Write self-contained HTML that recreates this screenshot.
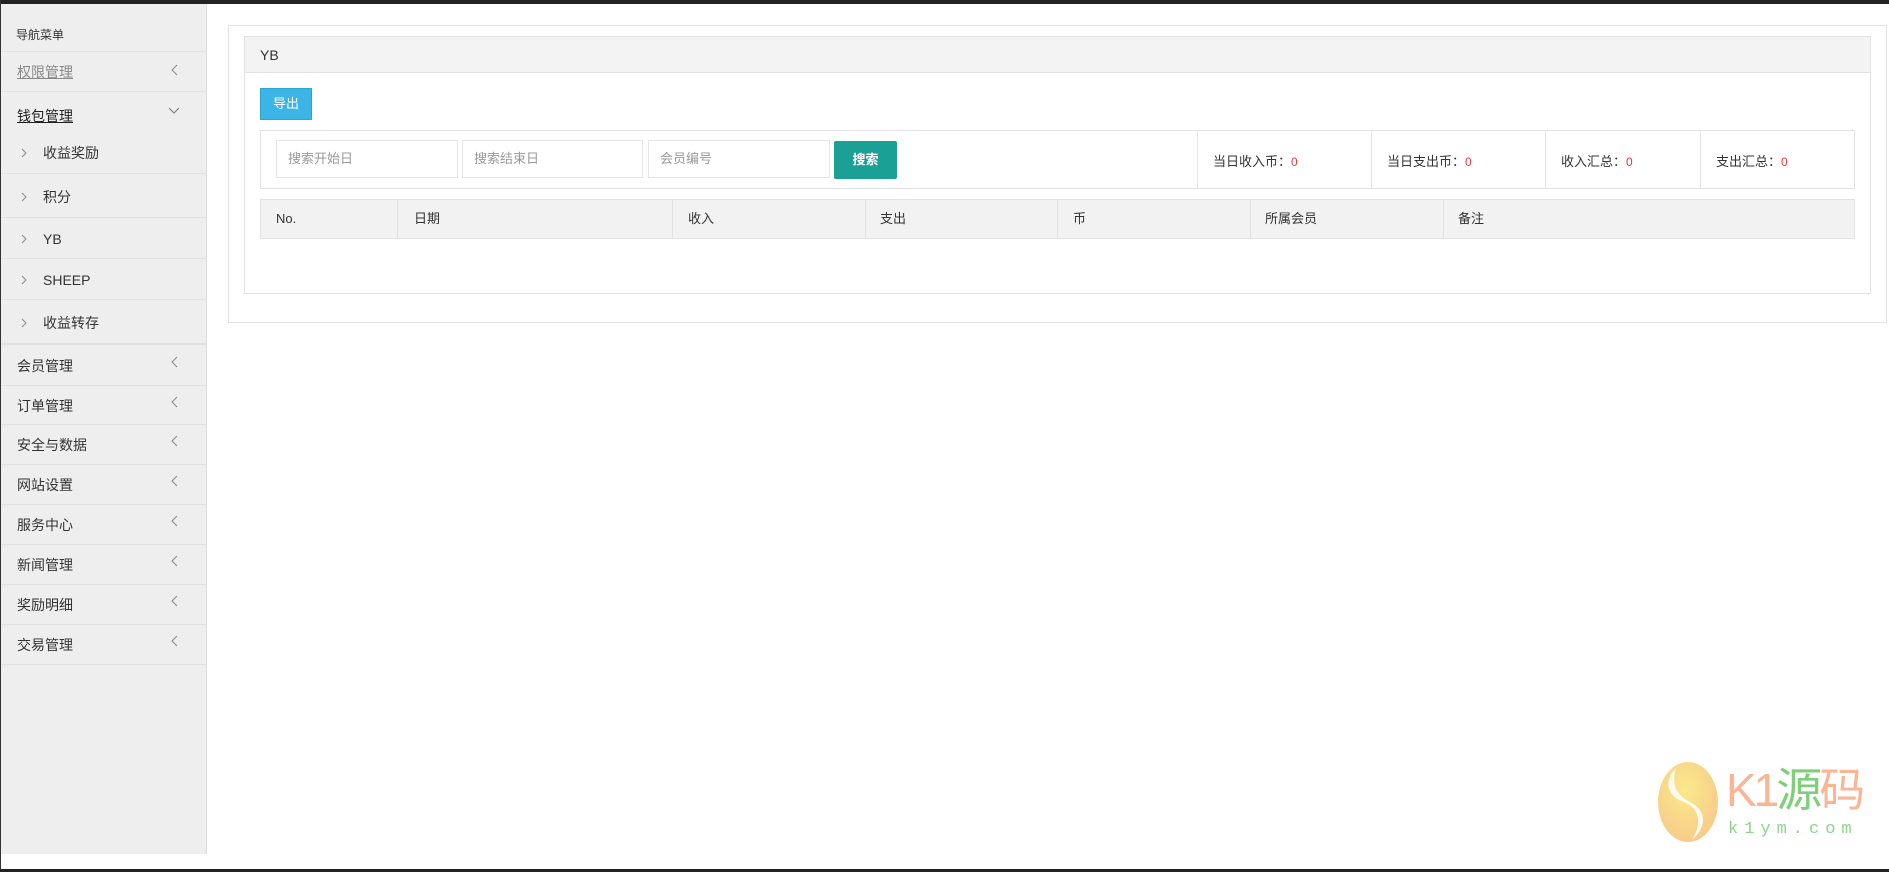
<!DOCTYPE html>
<html><head><meta charset="utf-8"><style>
*{margin:0;padding:0;box-sizing:border-box}
body{width:1889px;height:872px;position:relative;background:#fff;font-family:"Liberation Sans","Noto Sans CJK SC",sans-serif;font-size:14px;color:#333;overflow:hidden}
.a{position:absolute}
.top{left:0;top:0;width:1889px;height:4px;background:#222}
.bot{left:0;top:869px;width:1889px;height:3px;background:#222}
.lb{left:0;top:0;width:1px;height:872px;background:#333}
.side{left:1px;top:4px;width:206px;height:850px;background:#eee;border-right:1px solid #ddd}
.it{position:absolute;left:1px;width:206px;border-bottom:1px solid #e2e2e2;line-height:1}
.it .t{position:absolute;left:16px}
.it svg{position:absolute}
.ch{left:170px}
.sub .t{left:42px}
.sub svg{left:20px}
.inp{border:1px solid #e6e6e6;background:#fff;color:#999;font-size:13px;padding-left:11px;line-height:36px}
.vl{width:1px;background:#e6e6e6}
.th{top:199px;height:39px;line-height:39px;font-size:13px}
.r{color:#e33;font-size:12px}
</style></head><body>
<div class="a top"></div><div class="a lb"></div>
<div class="a side"></div>
<div class="a" style="left:16px;top:26px;font-size:12px">导航菜单</div>
<div class="it" style="top:51px;height:1px"></div>
<div class="it" style="top:52px;height:40px"><span class="t" style="top:13px;color:#888;text-decoration:underline">权限管理</span><svg class="ch" style="top:12px" width="8" height="12"><path d="M6 1L1 6L6 11" stroke="#888" fill="none"/></svg></div>
<div style="position:absolute;left:1px;top:92px;width:206px;height:40px"><span style="position:absolute;left:16px;top:14px;color:#222;text-decoration:underline">钱包管理</span><svg style="position:absolute;left:167px;top:15px" width="12" height="8"><path d="M1 1L6 6L11 1" stroke="#777" fill="none"/></svg></div>
<div class="it sub" style="top:132px;height:42px"><svg style="top:16px" width="6" height="10"><path d="M1 1L5 5L1 9" stroke="#888" fill="none"/></svg><span class="t" style="top:14px">收益奖励</span></div>
<div class="it sub" style="top:174px;height:44px"><svg style="top:18px" width="6" height="10"><path d="M1 1L5 5L1 9" stroke="#888" fill="none"/></svg><span class="t" style="top:16px">积分</span></div>
<div class="it sub" style="top:218px;height:41px"><svg style="top:16px" width="6" height="10"><path d="M1 1L5 5L1 9" stroke="#888" fill="none"/></svg><span class="t" style="top:14px">YB</span></div>
<div class="it sub" style="top:259px;height:41px"><svg style="top:16px" width="6" height="10"><path d="M1 1L5 5L1 9" stroke="#888" fill="none"/></svg><span class="t" style="top:14px">SHEEP</span></div>
<div class="it sub" style="top:300px;height:45px;border-bottom:2px solid #e2e2e2"><svg style="top:18px" width="6" height="10"><path d="M1 1L5 5L1 9" stroke="#888" fill="none"/></svg><span class="t" style="top:16px">收益转存</span></div>
<div class="it" style="top:346px;height:40px"><span class="t" style="top:13px">会员管理</span><svg class="ch" style="top:10px" width="8" height="12"><path d="M6 1L1 6L6 11" stroke="#888" fill="none"/></svg></div>
<div class="it" style="top:386px;height:39px"><span class="t" style="top:13px">订单管理</span><svg class="ch" style="top:10px" width="8" height="12"><path d="M6 1L1 6L6 11" stroke="#888" fill="none"/></svg></div>
<div class="it" style="top:425px;height:40px"><span class="t" style="top:13px">安全与数据</span><svg class="ch" style="top:10px" width="8" height="12"><path d="M6 1L1 6L6 11" stroke="#888" fill="none"/></svg></div>
<div class="it" style="top:465px;height:40px"><span class="t" style="top:13px">网站设置</span><svg class="ch" style="top:10px" width="8" height="12"><path d="M6 1L1 6L6 11" stroke="#888" fill="none"/></svg></div>
<div class="it" style="top:505px;height:40px"><span class="t" style="top:13px">服务中心</span><svg class="ch" style="top:10px" width="8" height="12"><path d="M6 1L1 6L6 11" stroke="#888" fill="none"/></svg></div>
<div class="it" style="top:545px;height:40px"><span class="t" style="top:13px">新闻管理</span><svg class="ch" style="top:10px" width="8" height="12"><path d="M6 1L1 6L6 11" stroke="#888" fill="none"/></svg></div>
<div class="it" style="top:585px;height:40px"><span class="t" style="top:13px">奖励明细</span><svg class="ch" style="top:10px" width="8" height="12"><path d="M6 1L1 6L6 11" stroke="#888" fill="none"/></svg></div>
<div class="it" style="top:625px;height:40px"><span class="t" style="top:13px">交易管理</span><svg class="ch" style="top:10px" width="8" height="12"><path d="M6 1L1 6L6 11" stroke="#888" fill="none"/></svg></div>

<div class="a" style="left:228px;top:25px;width:1659px;height:298px;border:1px solid #e2e2e2"></div>
<div class="a" style="left:244px;top:36px;width:1627px;height:258px;border:1px solid #e2e2e2"></div>
<div class="a" style="left:245px;top:37px;width:1625px;height:36px;line-height:36px;padding-left:15px;background:#f3f3f3;border-bottom:1px solid #e2e2e2">YB</div>
<div class="a" style="left:260px;top:88px;width:52px;height:32px;background:#3bb4e6;border:1px solid #2aa3d6;color:#fff;font-size:13px;line-height:30px;text-align:center">导出</div>
<div class="a" style="left:260px;top:130px;width:1595px;height:59px;border:1px solid #e2e2e2"></div>
<div class="a inp" style="left:276px;top:140px;width:182px;height:38px">搜索开始日</div>
<div class="a inp" style="left:462px;top:140px;width:181px;height:38px">搜索结束日</div>
<div class="a inp" style="left:648px;top:140px;width:182px;height:38px">会员编号</div>
<div class="a" style="left:834px;top:141px;width:63px;height:38px;background:#1aa094;border-radius:2px;color:#fff;font-weight:bold;font-size:13px;line-height:38px;text-align:center">搜索</div>
<div class="a vl" style="left:1197px;top:131px;height:57px"></div>
<div class="a vl" style="left:1371px;top:131px;height:57px"></div>
<div class="a vl" style="left:1545px;top:131px;height:57px"></div>
<div class="a vl" style="left:1700px;top:131px;height:57px"></div>
<div class="a" style="left:1213px;top:151px;font-size:13px">当日收入币：<span class="r">0</span></div>
<div class="a" style="left:1387px;top:151px;font-size:13px">当日支出币：<span class="r">0</span></div>
<div class="a" style="left:1561px;top:151px;font-size:13px">收入汇总：<span class="r">0</span></div>
<div class="a" style="left:1716px;top:151px;font-size:13px">支出汇总：<span class="r">0</span></div>
<div class="a" style="left:260px;top:199px;width:1595px;height:40px;background:#f2f2f2;border:1px solid #e2e2e2"></div>
<div class="a vl" style="left:397px;top:200px;height:38px;background:#e2e2e2"></div>
<div class="a vl" style="left:672px;top:200px;height:38px;background:#e2e2e2"></div>
<div class="a vl" style="left:865px;top:200px;height:38px;background:#e2e2e2"></div>
<div class="a vl" style="left:1057px;top:200px;height:38px;background:#e2e2e2"></div>
<div class="a vl" style="left:1250px;top:200px;height:38px;background:#e2e2e2"></div>
<div class="a vl" style="left:1443px;top:200px;height:38px;background:#e2e2e2"></div>
<div class="a th" style="left:276px">No.</div>
<div class="a th" style="left:414px">日期</div>
<div class="a th" style="left:688px">收入</div>
<div class="a th" style="left:880px">支出</div>
<div class="a th" style="left:1073px">币</div>
<div class="a th" style="left:1265px">所属会员</div>
<div class="a th" style="left:1458px">备注</div>

<svg class="a" style="left:1656px;top:760px" width="64" height="84"><defs><radialGradient id="g" cx="0.45" cy="0.35" r="0.7"><stop offset="0" stop-color="#fbe98a"/><stop offset="1" stop-color="#f6c98a"/></radialGradient></defs><ellipse cx="32" cy="42" rx="30" ry="40" fill="url(#g)"/><path d="M20 8C8 20 10 36 28 42C44 48 46 64 36 80C52 66 50 50 34 42C18 34 16 22 20 8Z" fill="#fff" opacity="0.85"/></svg>
<div class="a" style="left:1726px;top:762px;font-size:46px;line-height:56px;color:#fbb494;letter-spacing:-3px;white-space:nowrap">K1<span style="color:#7fcf7a">源</span>码</div>
<div class="a" style="left:1728px;top:820px;font-size:17px;letter-spacing:6px;color:#8fd38a;font-family:'Liberation Mono',monospace;white-space:nowrap">k1ym.com</div>
<div class="a bot"></div>
</body></html>
